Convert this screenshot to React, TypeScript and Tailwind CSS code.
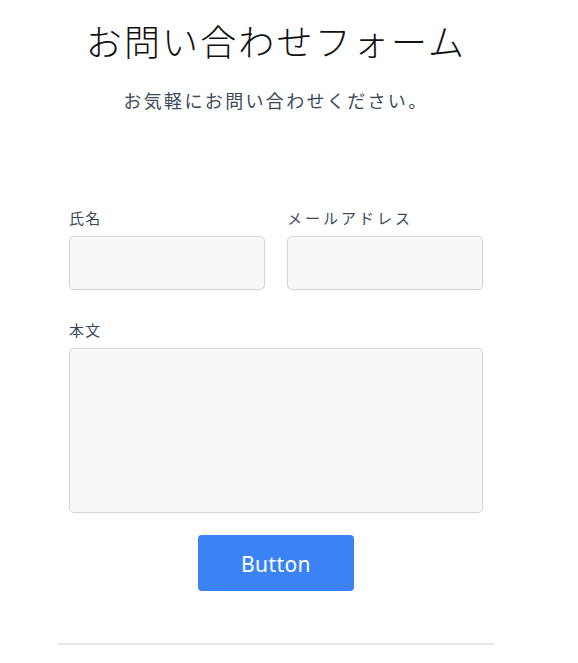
import React from "react";

export default function App() {
  return (
    <div className="min-h-[663px] w-[578px] bg-white" style={{ fontFamily: '"Noto Sans CJK JP", "Noto Sans", sans-serif' }}>
      <div className="w-[552px] flex flex-col items-center">
        <h1 className="pt-5 text-[36px] leading-[40px] tracking-[0.06em] font-light text-[#111]">お問い合わせフォーム</h1>
        <p className="mt-[26px] text-[18px] leading-[28px] tracking-[0.13em] text-[#3d4a5c]">お気軽にお問い合わせください。</p>
        <form className="mt-[92px] w-[414px] flex flex-col">
          <div className="flex gap-[22px]">
            <div className="flex flex-col w-[196px]">
              <label className="text-[15px] leading-[24px] tracking-[0.08em] text-[#3d4a5c]">氏名</label>
              <input className="mt-[6px] h-[54px] rounded-[5px] border border-[#d1d5db] bg-[#f8f8f8] outline-none" />
            </div>
            <div className="flex flex-col w-[196px]">
              <label className="text-[15px] leading-[24px] tracking-[0.2em] text-[#3d4a5c]">メールアドレス</label>
              <input className="mt-[6px] h-[54px] rounded-[5px] border border-[#d1d5db] bg-[#f8f8f8] outline-none" />
            </div>
          </div>
          <label className="mt-[28px] text-[15px] leading-[24px] tracking-[0.08em] text-[#3d4a5c]">本文</label>
          <textarea className="mt-[6px] h-[165px] rounded-[5px] border border-[#d1d5db] bg-[#f8f8f8] outline-none resize-none" />
          <div className="mt-[22px] flex justify-center">
            <button type="button" className="w-[156px] h-[56px] pt-[3px] rounded-[4px] bg-[#3b82f6] text-white text-[21px] tracking-[0.02em]" style={{ fontFamily: '"Noto Sans", sans-serif' }}>Button</button>
          </div>
        </form>
        <div className="mt-[52px] w-[436px] h-[2px] bg-[#e5e7eb]" />
      </div>
    </div>
  );
}
